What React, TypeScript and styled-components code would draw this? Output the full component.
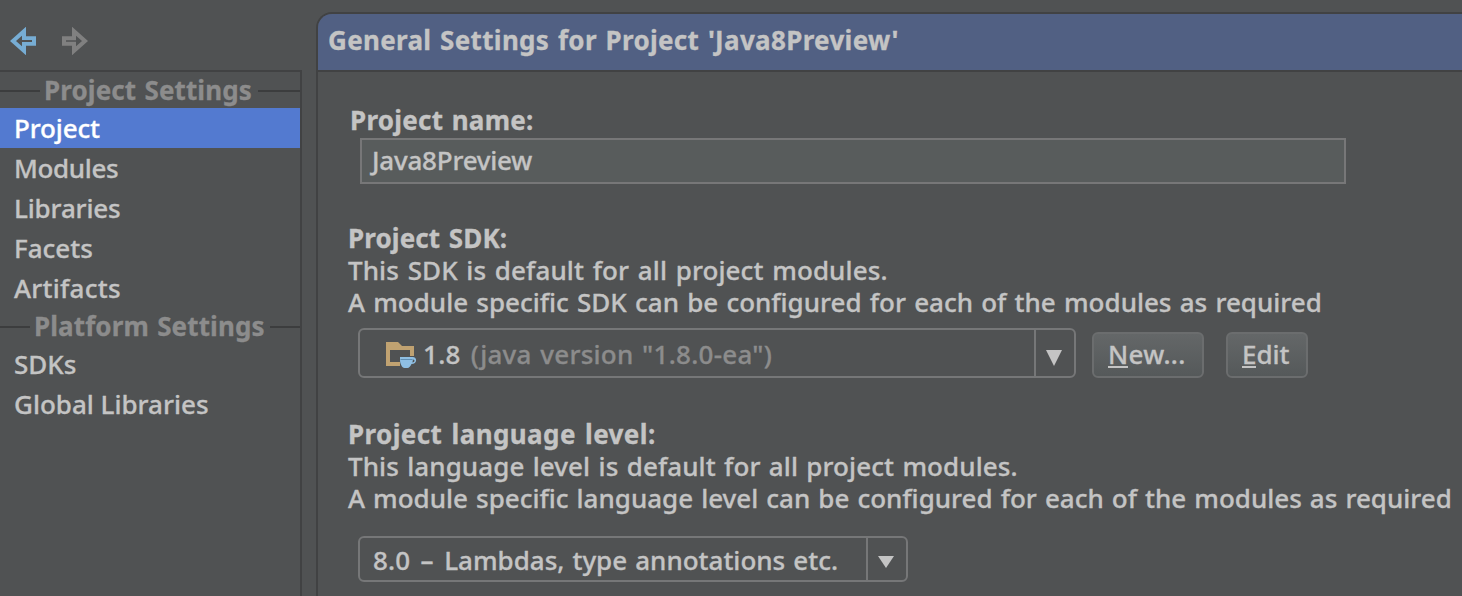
import React from 'react';
import styled, { createGlobalStyle } from 'styled-components';

const GlobalStyle = createGlobalStyle`
  html, body { margin: 0; padding: 0; background: #505253; overflow: hidden; }
  * { box-sizing: border-box; }
`;

const Window = styled.div`
  display: flex;
  width: 1462px;
  height: 596px;
  overflow: hidden;
  background: #505253;
  color: #c4c4c4;
  font-family: 'Noto Sans', 'Open Sans', sans-serif;
  font-size: 26px;
  font-weight: 500;
  white-space: nowrap;
  -webkit-text-stroke: 0.3px currentColor;
`;

const Label = styled.span<{ $spacing?: number; $word?: number }>`
  letter-spacing: ${(p) => p.$spacing ?? 0}px;
  word-spacing: ${(p) => p.$word ?? 0}px;
`;

const Sidebar = styled.aside`
  display: flex;
  flex-direction: column;
  flex: none;
  width: 302px;
`;

const NavButtons = styled.div`
  display: flex;
  gap: 24px;
  height: 70px;
  padding: 27px 0 0 10px;
`;

const NavPane = styled.nav`
  flex: 1;
  border-top: 2px solid #414243;
  border-right: 2px solid #414243;
`;

const SectionTitle = styled.h2`
  display: flex;
  align-items: center;
  height: 36px;
  margin: 0;
  line-height: 36px;
  font-size: 26px;
  font-weight: 700;
  color: #8c8c8c;
`;

const Rule = styled.span<{ $width: number; $gap?: number }>`
  width: ${(p) => p.$width}px;
  height: 2px;
  margin-right: ${(p) => p.$gap ?? 0}px;
  margin-left: ${(p) => (p.$gap ? 0 : 'auto')};
  margin-top: 2px;
  background: #3c3d3e;
`;

const NavItem = styled.div<{ $selected?: boolean }>`
  height: 40px;
  padding-left: 14px;
  line-height: 40px;
  background: ${(p) => (p.$selected ? '#537ad0' : 'transparent')};
  color: ${(p) => (p.$selected ? '#ffffff' : 'inherit')};
`;

const Panel = styled.main`
  flex: 1;
  min-width: 0;
  margin: 12px 0 0 14px;
  border: 2px solid #414243;
  border-width: 2px 0 0 2px;
  border-radius: 16px 0 0 0;
`;

const PanelHeader = styled.h1`
  height: 58px;
  margin: 0;
  padding-left: 10px;
  border-bottom: 2px solid #414243;
  border-radius: 14px 0 0 0;
  background: #516083;
  line-height: 52px;
  font-size: 26px;
  font-weight: 700;
`;

const Content = styled.div`
  padding: 32px 0 0 30px;
`;

const FieldGroup = styled.section<{ $height: number; $indent?: number }>`
  height: ${(p) => p.$height}px;
  padding-left: ${(p) => p.$indent ?? 0}px;
  line-height: 32px;
`;

const FieldTitle = styled.div`
  height: 32px;
  font-weight: 700;
`;

const Description = styled.div`
  height: 32px;
`;

const TextField = styled.div`
  width: 986px;
  height: 46px;
  margin: 2px 0 0 10px;
  padding-left: 10px;
  border: 2px solid #777778;
  background: #585c5c;
  line-height: 40px;
`;

const Controls = styled.div<{ $top: number }>`
  display: flex;
  align-items: flex-end;
  margin: ${(p) => p.$top}px 0 0 10px;
`;

const Combo = styled.div<{ $width: number; $height: number }>`
  display: flex;
  width: ${(p) => p.$width}px;
  height: ${(p) => p.$height}px;
  border: 2px solid #767778;
  border-radius: 6px;
`;

const ComboValue = styled.div<{ $indent: number; $line: number }>`
  display: flex;
  flex: 1;
  padding-left: ${(p) => p.$indent}px;
  line-height: ${(p) => p.$line}px;
`;

const ComboArrow = styled.div<{ $pad: number }>`
  width: 40px;
  padding: ${(p) => p.$pad}px 0 0 10px;
  border-left: 2px solid #767778;
  line-height: 0;
`;

const Muted = styled(Label)`
  margin-left: 10px;
  color: #8c8c8c;
`;

const Button = styled.div<{ $width: number; $gap: number }>`
  width: ${(p) => p.$width}px;
  height: 46px;
  margin-left: ${(p) => p.$gap}px;
  padding-left: 14px;
  border: 2px solid #6b6d6e;
  border-radius: 6px;
  background: linear-gradient(#646768, #55595a);
  line-height: 40px;
`;

const Mnemonic = styled.span`
  display: inline-block;
  height: 34px;
  line-height: 40px;
  border-bottom: 2px solid #c4c4c4;
  vertical-align: top;
`;

const BackIcon = () => (
  <svg width="28" height="28" viewBox="0 0 28 28">
    <path
      d="M14 4.200v7h10v5.600H14v7L3 14z"
      fill="none"
      stroke="#77add4"
      strokeWidth="4"
    />
    <path d="M9 14h13" stroke="#505253" strokeWidth="2" />
  </svg>
);

const ForwardIcon = () => (
  <svg width="28" height="28" viewBox="0 0 28 28">
    <path
      d="M12 4.200v7H2v5.600h10v7L23 14z"
      fill="none"
      stroke="#808080"
      strokeWidth="4"
    />
  </svg>
);

const SdkIcon = styled.svg`
  flex: none;
  margin: 11px 5px 0 0;
`;

const SdkFolder = () => (
  <SdkIcon width="32" height="28" viewBox="0 0 32 28">
    <path d="M0 1h12l4 4h12v10h-4V9H4v12h10v4H0z" fill="#c0a271" />
    <path
      d="M14 16h12.500c5 0 5 7-1 7-.8 2-2.500 4-4 4h-3c-2.500 0-4.500-4.500-4.500-8z"
      fill="#8fbfe3"
    />
    <path d="M14.500 18.500h12" stroke="#5f8fb5" strokeWidth="1" />
    <path d="M27 18.500c2.300 0 1.800 3-.6 3z" fill="#505253" />
  </SdkIcon>
);

const Arrow = ({ height }: { height: number }) => (
  <svg width="16" height={height} viewBox="0 0 16 16" preserveAspectRatio="none">
    <path d="M0 0h16L8 16z" fill="#c4c4c4" />
  </svg>
);

export default function App() {
  return (
    <>
      <GlobalStyle />
      <Window>
        <Sidebar>
          <NavButtons>
            <BackIcon />
            <ForwardIcon />
          </NavButtons>
          <NavPane>
            <SectionTitle>
              <Rule $width={40} $gap={4} />
              <Label $spacing={0.1} $word={1.5}>Project Settings</Label>
              <Rule $width={42} />
            </SectionTitle>
            <NavItem $selected><Label $spacing={-0.15}>Project</Label></NavItem>
            <NavItem><Label $spacing={-0.35}>Modules</Label></NavItem>
            <NavItem><Label $spacing={-0.15}>Libraries</Label></NavItem>
            <NavItem><Label>Facets</Label></NavItem>
            <NavItem><Label $spacing={0.25}>Artifacts</Label></NavItem>
            <SectionTitle>
              <Rule $width={30} $gap={4} />
              <Label $spacing={0.1} $word={1.5}>Platform Settings</Label>
              <Rule $width={30} />
            </SectionTitle>
            <NavItem><Label>SDKs</Label></NavItem>
            <NavItem><Label>Global Libraries</Label></NavItem>
          </NavPane>
        </Sidebar>
        <Panel>
          <PanelHeader>
            <Label $spacing={0.32} $word={1.6}>General Settings for Project 'Java8Preview'</Label>
          </PanelHeader>
          <Content>
            <FieldGroup $height={118} $indent={2}>
              <FieldTitle><Label $spacing={0.27} $word={1.3}>Project name:</Label></FieldTitle>
              <TextField><Label $spacing={-0.22}>Java8Preview</Label></TextField>
            </FieldGroup>
            <FieldGroup $height={196}>
              <FieldTitle><Label $spacing={0.1} $word={1.8}>Project SDK:</Label></FieldTitle>
              <Description><Label $spacing={0.1} $word={1.8}>This SDK is default for all project modules.</Label></Description>
              <Description><Label $word={1.45}>A module specific SDK can be configured for each of the modules as required</Label></Description>
              <Controls $top={10}>
                <Combo $width={718} $height={50}>
                  <ComboValue $indent={26} $line={48}>
                    <SdkFolder />
                    <Label $spacing={0.3}>1.8</Label>
                    <Muted $spacing={0.27} $word={1.5}>(java version "1.8.0-ea")</Muted>
                  </ComboValue>
                  <ComboArrow $pad={20}><Arrow height={16} /></ComboArrow>
                </Combo>
                <Button $width={112} $gap={16}><Label $spacing={0.3}><Mnemonic>N</Mnemonic>ew...</Label></Button>
                <Button $width={82} $gap={22}><Label><Mnemonic>E</Mnemonic>dit</Label></Button>
              </Controls>
            </FieldGroup>
            <FieldGroup $height={178}>
              <FieldTitle><Label $spacing={0.4} $word={2.1}>Project language level:</Label></FieldTitle>
              <Description><Label $spacing={0.08} $word={1.5}>This language level is default for all project modules.</Label></Description>
              <Description><Label $word={1.3}>A module specific language level can be configured for each of the modules as required</Label></Description>
              <Controls $top={22}>
                <Combo $width={550} $height={46}>
                  <ComboValue $indent={13} $line={44}>
                    <Label $word={1.3}>
                      <Label $spacing={0.1} $word={3.6}>8.0 – </Label>
                      Lambdas, type annotations etc.
                    </Label>
                  </ComboValue>
                  <ComboArrow $pad={18}><Arrow height={12} /></ComboArrow>
                </Combo>
              </Controls>
            </FieldGroup>
          </Content>
        </Panel>
      </Window>
    </>
  );
}
